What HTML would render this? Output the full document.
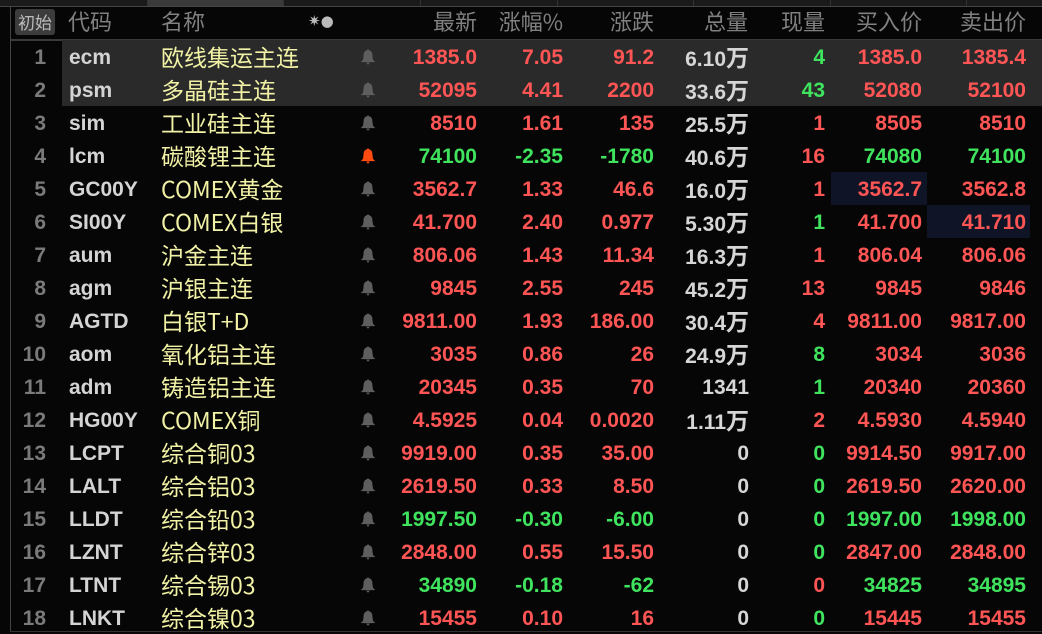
<!DOCTYPE html>
<html><head><meta charset="utf-8"><style>
body{margin:0;width:1042px;height:634px;background:#060606;overflow:hidden;font-family:"Liberation Sans","Noto Sans CJK SC",sans-serif;position:relative}
.top{position:absolute;left:0;top:0;width:1042px;height:6px;background:#1a1a1a;border-bottom:1px solid #444}
.seg{position:absolute;top:0;height:6px;border-left:1px solid #333}
.vl{position:absolute;left:10px;top:7px;width:1px;height:625px;background:#444}
.bl{position:absolute;left:10px;top:631px;width:1032px;height:1px;background:#333}
.hdr{position:absolute;top:7px;height:32px;left:11px;right:0;border-bottom:2px solid #3a3a3a;color:#808080;font-size:22px;font-family:"Noto Sans CJK SC",sans-serif}
.hdr span{position:absolute;top:-2px;white-space:nowrap}
.row{position:absolute;left:11px;right:0;height:33px;font-size:21px}
.row span{position:absolute;top:6px;white-space:nowrap;font-weight:bold}
.n{color:#7a7a7a;text-align:right;width:40px;left:-5px}
.c{color:#d4d4d4;left:58px}
.nm{color:#f2f2a6;left:150px;font-weight:normal!important;font-family:"Noto Sans CJK SC",sans-serif;font-size:23px;top:-1px!important}
.r{color:#ff5555}.g{color:#3fe35e}.w{color:#d6d6d6}
.bell{position:absolute;left:348px;top:8px;width:18px;height:18px}
.wan{font-weight:normal;font-family:"Noto Sans CJK SC",sans-serif;color:#d6d6d6;font-size:23px}
</style></head><body>
<div class="top">
<div class="seg" style="left:0;width:147px;border:none"></div>
<div class="seg" style="left:147px;width:136px;background:#3a3a3a"></div>
<div class="seg" style="left:283px"></div><div class="seg" style="left:420px"></div><div class="seg" style="left:557px"></div><div class="seg" style="left:693px"></div><div class="seg" style="left:830px"></div><div class="seg" style="left:966px"></div>
</div>
<div class="vl"></div><div class="bl"></div>
<div class="hdr">
<span style="left:4px;top:2px;background:#3c3c3c;color:#bbb;font-size:17px;padding:0 3px;border-radius:3px;line-height:26px">初始</span>
<span style="left:57px">代码</span><span style="left:150px">名称</span>
<span style="left:297px;font-size:15px;top:5px;color:#bbb;font-family:'DejaVu Sans',sans-serif">✷●</span>
<span style="right:565px">最新</span><span style="right:479px">涨幅%</span><span style="right:388px">涨跌</span><span style="right:294px">总量</span><span style="right:217px">现量</span><span style="right:120px">买入价</span><span style="right:16px">卖出价</span>
</div>
<div style="position:absolute;top:40px;height:66px;left:62px;right:0;background:#2a2a2a"></div>
<div style="position:absolute;left:831px;top:172px;width:96px;height:33px;background:#0f1526"></div>
<div style="position:absolute;left:927px;top:205px;width:103px;height:33px;background:#0f1526"></div>
<div id="rows"></div>
<script>
var d=[
["1","ecm","欧线集运主连","r","1385.0","7.05","91.2","6.10","万","g","4","1385.0","1385.4"],
["2","psm","多晶硅主连","r","52095","4.41","2200","33.6","万","g","43","52080","52100"],
["3","sim","工业硅主连","r","8510","1.61","135","25.5","万","r","1","8505","8510"],
["4","lcm","碳酸锂主连","g","74100","-2.35","-1780","40.6","万","r","16","74080","74100"],
["5","GC00Y","COMEX黄金","r","3562.7","1.33","46.6","16.0","万","r","1","3562.7","3562.8"],
["6","SI00Y","COMEX白银","r","41.700","2.40","0.977","5.30","万","g","1","41.700","41.710"],
["7","aum","沪金主连","r","806.06","1.43","11.34","16.3","万","r","1","806.04","806.06"],
["8","agm","沪银主连","r","9845","2.55","245","45.2","万","r","13","9845","9846"],
["9","AGTD","白银T+D","r","9811.00","1.93","186.00","30.4","万","r","4","9811.00","9817.00"],
["10","aom","氧化铝主连","r","3035","0.86","26","24.9","万","g","8","3034","3036"],
["11","adm","铸造铝主连","r","20345","0.35","70","1341","","g","1","20340","20360"],
["12","HG00Y","COMEX铜","r","4.5925","0.04","0.0020","1.11","万","r","2","4.5930","4.5940"],
["13","LCPT","综合铜03","r","9919.00","0.35","35.00","0","","g","0","9914.50","9917.00"],
["14","LALT","综合铝03","r","2619.50","0.33","8.50","0","","g","0","2619.50","2620.00"],
["15","LLDT","综合铅03","g","1997.50","-0.30","-6.00","0","","g","0","1997.00","1998.00"],
["16","LZNT","综合锌03","r","2848.00","0.55","15.50","0","","g","0","2847.00","2848.00"],
["17","LTNT","综合锡03","g","34890","-0.18","-62","0","","r","0","34825","34895"],
["18","LNKT","综合镍03","r","15455","0.10","16","0","","g","0","15445","15455"]];
var h="";
d.forEach(function(a,i){
var t=40+33*i,c=a[3];
var bell='<svg class="bell" viewBox="0 0 16 16"><path d="M8 1 L9 2 C11.5 2.6 12 5 12 7.5 L12.5 10.5 L14.5 12.5 L1.5 12.5 L3.5 10.5 L4 7.5 C4 5 4.5 2.6 7 2 Z M6.3 13 L9.7 13 L8 15 Z" fill="'+(i==3?'#ff4a10':'#5e5e5e')+'"/></svg>';
var vol=a[8]?a[7]+'<span class="wan" style="position:static">万</span>':a[7];
h+='<div class="row" style="top:'+t+'px"><span class="n">'+a[0]+'</span><span class="c">'+a[1]+'</span><span class="nm">'+a[2]+'</span>'+bell+
'<span class="'+c+'" style="right:565px">'+a[4]+'</span><span class="'+c+'" style="right:479px">'+a[5]+'</span><span class="'+c+'" style="right:388px">'+a[6]+'</span>'+
'<span class="w" style="right:293px;top:'+(a[8]?-1:6)+'px">'+vol+'</span><span class="'+a[9]+'" style="right:217px">'+a[10]+'</span>'+
'<span class="'+c+'" style="right:120px">'+a[11]+'</span><span class="'+c+'" style="right:16px">'+a[12]+'</span></div>';
});
document.getElementById("rows").innerHTML=h;
</script>
</body></html>
